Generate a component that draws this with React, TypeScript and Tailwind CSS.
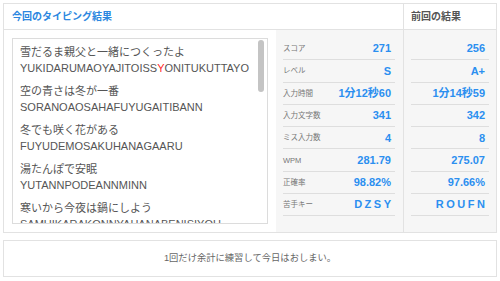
import React from "react";

const FONT = { fontFamily: '"Liberation Sans", "Noto Sans CJK JP", sans-serif' };

const entries = [
  { jp: "雪だるま親父と一緒につくったよ", ro: "YUKIDARUMAOYAJITOISS", err: "Y", rest: "ONITUKUTTAYO" },
  { jp: "空の青さは冬が一番", ro: "SORANOAOSAHAFUYUGAITIBANN" },
  { jp: "冬でも咲く花がある", ro: "FUYUDEMOSAKUHANAGAARU" },
  { jp: "湯たんぽで安眠", ro: "YUTANNPODEANNMINN" },
  { jp: "寒いから今夜は鍋にしよう", ro: "SAMUIKARAKONNYAHANABENISIYOU" },
];

const labels = ["スコア", "レベル", "入力時間", "入力文字数", "ミス入力数", "WPM", "正確率", "苦手キー"];
const cur = ["271", "S", "1分12秒60", "341", "4", "281.79", "98.82%", "DZSY"];
const prev = ["256", "A+", "1分14秒59", "342", "8", "275.07", "97.66%", "ROUFN"];

function Value({ v, spaced }: { v: string; spaced: boolean }) {
  if (spaced) {
    return (
      <span className="flex gap-[2.5px]">
        {v.split("").map((c, i) => (
          <span key={i}>{c}</span>
        ))}
      </span>
    );
  }
  return <span>{v}</span>;
}

export default function App() {
  return (
    <div className="w-[500px] h-[281px] bg-white" style={FONT}>
      <div className="mx-[3px] mt-[3px] border border-[#e2e2e2] flex">
        <div className="w-[399px] flex flex-col">
          <div className="h-[26px] border-b border-[#e2e2e2] flex items-center pl-[8px] text-[10px] font-bold text-[#2b87e0]">
            今回のタイピング結果
          </div>
          <div className="h-[202px] flex">
            <div className="w-[272px] bg-white pl-[8px] pt-[8px]">
              <div className="relative w-[256px] h-[186px] border border-[#dcdcdc] overflow-hidden pl-[7px] pt-[5px] text-[11px] leading-[16px] text-[#555]">
                {entries.map((e, i) => (
                  <div key={i} className="mb-[7px] whitespace-nowrap">
                    <div>{e.jp}</div>
                    <div>
                      {e.ro}
                      {e.err && <span className="text-[#ff2a2a]">{e.err}</span>}
                      {e.rest}
                    </div>
                  </div>
                ))}
                <div className="absolute right-[3px] top-[1px] w-[6px] h-[52px] rounded-full bg-[#c4c4c4]" />
              </div>
            </div>
            <div className="flex-1 bg-[#f6f6f6] pl-[7px] pr-[8px] pt-[8px]">
              {labels.map((l, i) => (
                <div key={i} className="h-[22.3px] border-b border-[#dedede] flex items-center justify-between pr-[4px]">
                  <span className="text-[7.5px] text-[#777]">{l}</span>
                  <span className="text-[11px] font-bold text-[#2b8ff0]">
                    <Value v={cur[i]} spaced={i === 7} />
                  </span>
                </div>
              ))}
            </div>
          </div>
        </div>
        <div className="flex-1 border-l border-[#e2e2e2] flex flex-col">
          <div className="h-[26px] border-b border-[#e2e2e2] flex items-center pl-[7px] text-[10px] font-bold text-[#555]">
            前回の結果
          </div>
          <div className="h-[202px] bg-[#f6f6f6] px-[7px] pt-[8px]">
            {prev.map((v, i) => (
              <div key={i} className="h-[22.3px] border-b border-[#dedede] flex items-center justify-end pr-[4px]">
                <span className="text-[11px] font-bold text-[#2b8ff0]">
                  <Value v={v} spaced={i === 7} />
                </span>
              </div>
            ))}
          </div>
        </div>
      </div>
      <div className="mx-[3px] mt-[7px] h-[37px] border border-[#e2e2e2] flex items-center justify-center text-[9.3px] text-[#666]">
        1回だけ余計に練習して今日はおしまい。
      </div>
    </div>
  );
}
